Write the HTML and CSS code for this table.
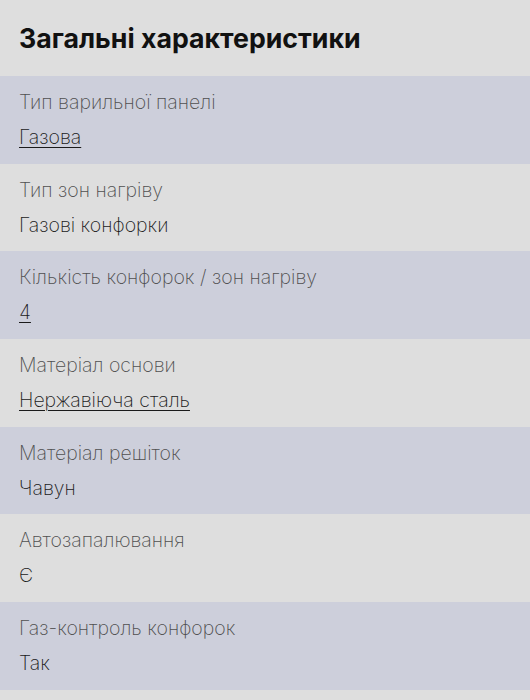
FILE: index.html
```html
<!DOCTYPE html>
<html lang="uk">
<head>
<meta charset="utf-8">
<link rel="stylesheet" href="styles.css">
</head>
<body>
<div class="page">
  <h2 class="title">Загальні характеристики</h2>
  <div class="list">
    <div class="row alt"><div class="label">Тип варильної панелі</div><div class="value"><a href="#">Газова</a></div></div>
    <div class="row"><div class="label">Тип зон нагріву</div><div class="value">Газові конфорки</div></div>
    <div class="row alt"><div class="label">Кількість конфорок / зон нагріву</div><div class="value"><a href="#">4</a></div></div>
    <div class="row"><div class="label">Матеріал основи</div><div class="value"><a href="#">Нержавіюча сталь</a></div></div>
    <div class="row alt"><div class="label">Матеріал решіток</div><div class="value">Чавун</div></div>
    <div class="row"><div class="label">Автозапалювання</div><div class="value">Є</div></div>
    <div class="row alt"><div class="label">Газ-контроль конфорок</div><div class="value">Так</div></div>
    <div class="row end"></div>
  </div>
</div>
</body>
</html>
```

FILE: styles.css
```css
html, body {
  margin: 0;
  padding: 0;
  background: #dedede;
}
body {
  font-family: Inter, Roboto, sans-serif;
}
.page {
  height: 700px;
  overflow: hidden;
  display: flex;
  flex-direction: column;
}
.title {
  margin: 0;
  height: 76px;
  flex: none;
  display: flex;
  align-items: center;
  padding: 0 19px;
  font-size: 26.7px;
  font-weight: 700;
  color: #111;
  box-sizing: border-box;
}
.list {
  display: flex;
  flex-direction: column;
}
.row {
  height: 87.7px;
  flex: none;
  box-sizing: border-box;
  padding: 13px 19px 0;
  display: flex;
  flex-direction: column;
  gap: 9px;
}
.row.alt {
  background: #cdcfdb;
}
.label {
  font-size: 19.5px;
  font-weight: 250;
  line-height: 26px;
  color: #505050;
}
.value {
  font-size: 19.5px;
  font-weight: 250;
  line-height: 26px;
  color: #1a1a1a;
}
.value a {
  color: #1a1a1a;
  text-decoration: underline;
  text-underline-offset: 3px;
  text-decoration-thickness: 1px;
}
```
